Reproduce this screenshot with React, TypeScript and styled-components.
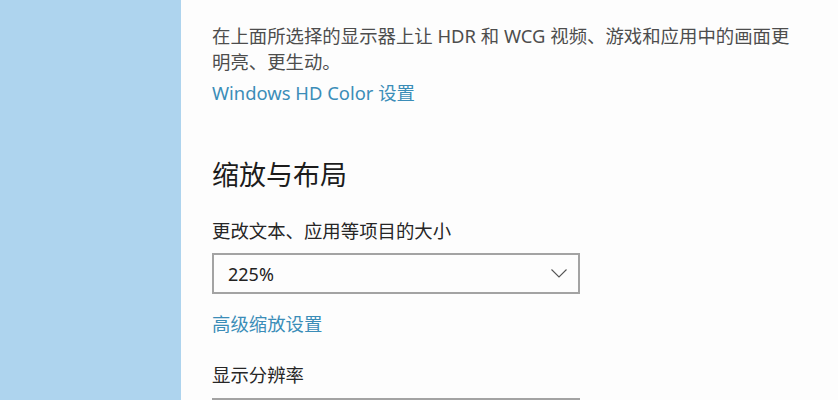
import styled, { createGlobalStyle } from "styled-components";

const GlobalStyle = createGlobalStyle`
  html, body {
    margin: 0;
    padding: 0;
    background: #ffffff;
  }
  body {
    font-family: "Noto Sans", "Noto Sans CJK SC", sans-serif;
    overflow: hidden;
  }
`;

const Page = styled.div`
  display: flex;
  width: 838px;
  height: 400px;
  overflow: hidden;
`;

const Sidebar = styled.div`
  width: 181px;
  flex-shrink: 0;
  background: #aed4ee;
`;

const Content = styled.div`
  flex: 1;
  display: flex;
  flex-direction: column;
  align-items: flex-start;
  padding: 23px 0 0 31px;
  background: #fdfdfd;
`;

const Description = styled.p`
  margin: 0;
  font-size: 18.4px;
  line-height: 26px;
  color: #4d4d4d;
  white-space: nowrap;
`;

const Link = styled.a<{ gap: number }>`
  margin-top: ${(p) => p.gap}px;
  font-size: 18.4px;
  line-height: 26px;
  color: #3b8db8;
  cursor: pointer;
`;

const Heading = styled.h2`
  margin: 51px 0 0;
  font-size: 27px;
  line-height: 36px;
  font-weight: 400;
  color: #1c1c1c;
`;

const Label = styled.div`
  margin-top: 25px;
  font-size: 18.4px;
  line-height: 26px;
  color: #262626;
`;

const Select = styled.div<{ gap: number }>`
  box-sizing: border-box;
  margin-top: ${(p) => p.gap}px;
  width: 368px;
  height: 41px;
  border: 2px solid #a3a3a3;
  display: flex;
  align-items: center;
  justify-content: space-between;
  padding: 0 11px 0 14px;
  font-size: 18px;
  color: #222;
  flex-shrink: 0;
`;

const Chevron = () => (
  <svg width="16" height="9" viewBox="0 0 16 9">
    <polyline
      points="0.5,0.5 8,8 15.5,0.5"
      fill="none"
      stroke="#555"
      strokeWidth="1.1"
    />
  </svg>
);

const App = () => {
  return (
    <>
      <GlobalStyle />
      <Page>
        <Sidebar />
        <Content>
          <Description>
            在上面所选择的显示器上让 HDR 和 WCG 视频、游戏和应用中的画面更
            <br />
            明亮、更生动。
          </Description>
          <Link gap={5}>Windows HD Color 设置</Link>
          <Heading>缩放与布局</Heading>
          <Label>更改文本、应用等项目的大小</Label>
          <Select gap={9}>
            <span>225%</span>
            <Chevron />
          </Select>
          <Link gap={17}>高级缩放设置</Link>
          <Label>显示分辨率</Label>
          <Select gap={10} />
        </Content>
      </Page>
    </>
  );
};

export default App;
